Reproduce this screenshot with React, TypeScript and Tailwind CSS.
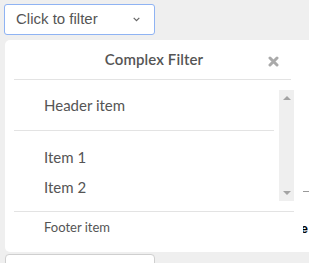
import React from "react";

const items = ["Item 1", "Item 2"];

function CloseIcon() {
  return (
    <svg width="11" height="11" viewBox="0 0 11 11" className="block">
      <path d="M2 2 L9 9 M9 2 L2 9" stroke="#aaaaaa" strokeWidth="3" strokeLinecap="round" />
    </svg>
  );
}

function Chevron() {
  return (
    <svg width="7" height="5" viewBox="0 0 7 5" className="block">
      <path d="M0.7 0.8 L3.5 3.7 L6.3 0.8" fill="none" stroke="#666" strokeWidth="1.2" />
    </svg>
  );
}

function Scrollbar() {
  return (
    <div className="flex w-[15px] shrink-0 flex-col items-center justify-between bg-[#efefef] py-[6px]">
      <span className="block h-0 w-0 border-x-[4px] border-b-[4px] border-x-transparent border-b-[#a3a3a3]" />
      <span className="block h-0 w-0 border-x-[4px] border-t-[4px] border-x-transparent border-t-[#a3a3a3]" />
    </div>
  );
}

function FilterPanel() {
  return (
    <div className="absolute left-[5px] top-[40px] z-10 flex h-[212px] w-[298px] flex-col rounded-[5px] bg-white font-['Lato','Open_Sans',sans-serif] text-[#555]">
      <div className="relative flex h-[39px] items-center justify-center">
        <span className="text-[15px] font-semibold tracking-[0.1px]">Complex Filter</span>
        <button className="absolute right-[24px] top-[16px]">
          <CloseIcon />
        </button>
      </div>
      <div className="ml-[9px] mr-[12px] border-t border-[#e3e3e3]" />
      <div className="ml-[9px] mr-[9px] mt-[10px] flex h-[111px] overflow-hidden">
        <div className="flex-1 overflow-hidden">
          <div className="pl-[30px] pt-[5px] text-[15px] leading-[20px]">Header item</div>
          <div className="mr-[5px] mt-[15px] border-t border-[#e3e3e3]" />
          <ul className="mt-[11px]">
            {items.map((item) => (
              <li key={item} className="h-[30px] pl-[30px] text-[15px] leading-[30px]">
                {item}
              </li>
            ))}
          </ul>
        </div>
        <Scrollbar />
      </div>
      <div className="ml-[9px] mr-[9px] mt-[10px] border-t border-[#e3e3e3]" />
      <div className="pl-[39px] pt-[6px] text-[13px] leading-[18px]">Footer item</div>
    </div>
  );
}

export default function App() {
  return (
    <div className="relative h-screen overflow-hidden bg-[#efefef] font-['Liberation_Sans',Arial,sans-serif]">
      <div className="pl-[4px] pt-[4px]">
        <button className="flex h-[31px] w-[151px] items-center justify-between rounded-[3px] border border-[#8fb3f3] bg-white pl-[11px] pr-[14px] text-[15px] text-[#555]">
          <span>Click to filter</span>
          <Chevron />
        </button>
      </div>
      <div className="mt-[5px] flex gap-[5px] pl-[5px]">
        <div className="w-[150px] shrink-0 pt-[214px]">
          <div className="h-[30px] rounded-[4px] border border-[#cfcfcf] bg-white" />
        </div>
        <div className="flex h-[212px] flex-1 flex-col bg-white">
          <div className="h-[151px]" />
          <div className="border-t border-[#999]" />
          <div className="pr-[1px] pt-[27px] text-right text-[13px] font-bold text-black">Table</div>
        </div>
      </div>
      <FilterPanel />
    </div>
  );
}
